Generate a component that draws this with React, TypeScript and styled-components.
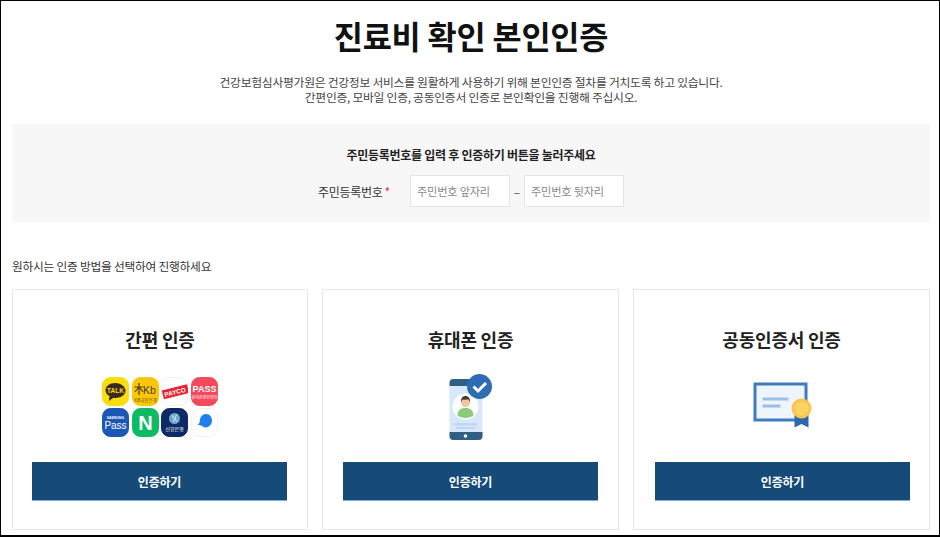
import React from 'react';
import styled, { createGlobalStyle } from 'styled-components';

const GlobalStyle = createGlobalStyle`
  html, body {
    margin: 0;
    padding: 0;
    background: #fff;
    font-family: 'Noto Sans CJK KR', 'Noto Sans', sans-serif;
  }
  * { box-sizing: border-box; }
`;

const Page = styled.div`
  width: 940px;
  height: 537px;
  overflow: hidden;
  border: solid #000;
  border-width: 1px 1px 2px 1px;
  padding: 0 9px 0 11px;
  background: #fff;
`;

const Title = styled.h1`
  margin: 10px 0 0;
  height: 48px;
  line-height: 48px;
  font-size: 31.7px;
  font-weight: 700;
  letter-spacing: -0.2px;
  color: #111;
  text-align: center;
`;

const Intro = styled.p`
  margin: 15px 0 0;
  font-size: 11.8px;
  line-height: 15px;
  letter-spacing: -0.27px;
  color: #444;
  text-align: center;
`;

const Panel = styled.section`
  margin-top: 20px;
  height: 98px;
  padding-top: 21px;
  background: #f7f7f7;
  display: flex;
  flex-direction: column;
  align-items: center;
`;

const PanelHeading = styled.h2`
  margin: 0;
  font-size: 12px;
  line-height: 20px;
  font-weight: 700;
  letter-spacing: -0.27px;
  color: #222;
`;

const FieldRow = styled.div`
  margin-top: 10px;
  display: flex;
  align-items: center;
`;

const FieldLabel = styled.label`
  width: 92px;
  font-size: 12px;
  letter-spacing: -0.3px;
  color: #333;
`;

const Required = styled.span`
  color: #d9304f;
  margin-left: 2px;
`;

const NumberInput = styled.input`
  width: 100px;
  height: 32px;
  padding: 0 6px;
  border: 1px solid #e4e4e4;
  background: #fff;
  font-family: inherit;
  font-size: 11.2px;
  letter-spacing: -0.2px;
  outline: none;
  &::placeholder { color: #8a8a8a; opacity: 1; }
`;

const Dash = styled.span`
  width: 14px;
  text-align: center;
  font-size: 12px;
  color: #555;
`;

const Guide = styled.p`
  margin: 34px 0 0;
  font-size: 11.7px;
  line-height: 20px;
  letter-spacing: -0.22px;
  color: #333;
`;

const CardGrid = styled.div`
  margin-top: 13px;
  display: grid;
  grid-template-columns: 296px 297px 297px;
  column-gap: 14px;
`;

const Card = styled.article`
  height: 241px;
  border: 1px solid #e6e6e6;
  display: flex;
  flex-direction: column;
  align-items: center;
`;

const CardTitle = styled.h3`
  margin: 35px 0 0;
  height: 28px;
  line-height: 28px;
  font-size: 18px;
  font-weight: 700;
  letter-spacing: -0.2px;
  color: #222;
`;

const IconArea = styled.div`
  margin-top: 22px;
  height: 63px;
  display: flex;
  align-items: center;
  justify-content: center;
`;

const Logos = styled.div`
  display: grid;
  grid-template-columns: repeat(4, 27px);
  grid-auto-rows: 29px;
  column-gap: 2.5px;
  row-gap: 2px;
`;

const AuthButton = styled.button<{ $inset: number }>`
  margin: 24px 0 0 ${({ $inset }) => $inset}px;
  align-self: flex-start;
  width: 255px;
  height: 39px;
  border: 0;
  border-bottom: 1px solid #7fb0d0;
  background: #154a79;
  color: #fff;
  font-family: inherit;
  font-size: 12px;
  font-weight: 700;
  letter-spacing: -0.2px;
`;

const LOGO_FONT = "'Liberation Sans', 'Noto Sans CJK KR', sans-serif";

const Tile = ({ fill, children }: { fill: string; children: React.ReactNode }) => (
  <svg width="27" height="29" viewBox="0 0 27 29">
    <rect
      x="0.5"
      y="0.5"
      width="26"
      height="28"
      rx="8"
      fill={fill}
      stroke={fill === '#ffffff' ? '#f1f1f1' : fill}
    />
    {children}
  </svg>
);

const LogoGrid = () => (
  <Logos>
    <Tile fill="#fbdc0c">
      <path d="M13.500 6c-6.200 0-10 3.400-10 7.300 0 2.500 1.600 4.600 4 5.800L6.800 24l4.500-3.300c.7.100 1.500.2 2.200.2 5.800 0 10-3.200 10-7.100S19.300 6 13.500 6z" fill="#3b2a22" />
      <text x="13.500" y="16" textAnchor="middle" fontSize="6.500" fontWeight="700" fill="#fbdc0c" fontFamily={LOGO_FONT}>TALK</text>
    </Tile>
    <Tile fill="#fcc60a">
      <path d="M7 6v12M2.500 10l9 0M3 15l4-5 4 5" stroke="#4c3f22" strokeWidth="1.200" fill="none" />
      <text x="11" y="17" fontSize="10.500" fill="#4c3f22" fontFamily={LOGO_FONT}>Kb</text>
      <text x="13.500" y="25" textAnchor="middle" fontSize="4.500" fill="#6b5a20" fontFamily={LOGO_FONT}>KB국민은행</text>
    </Tile>
    <Tile fill="#ffffff">
      <g transform="rotate(-14 13.500 15)">
        <rect x="1.500" y="10.500" width="26" height="9" fill="#e8222f" />
        <text x="14" y="17.500" textAnchor="middle" fontSize="6.400" fontWeight="700" fill="#fff" fontFamily={LOGO_FONT}>PAYCO</text>
      </g>
    </Tile>
    <Tile fill="#f4495c">
      <text x="13.500" y="15" textAnchor="middle" fontSize="9" fontWeight="700" fill="#fff" fontFamily={LOGO_FONT}>PASS</text>
      <text x="13.500" y="22" textAnchor="middle" fontSize="4" fill="#fff" fontFamily={LOGO_FONT}>휴대폰본인확인</text>
    </Tile>
    <Tile fill="#1b57b5">
      <text x="13.500" y="11" textAnchor="middle" fontSize="3.400" fontWeight="700" fill="#fff" fontFamily={LOGO_FONT}>SAMSUNG</text>
      <text x="13.500" y="20.500" textAnchor="middle" fontSize="10" fill="#fff" fontFamily={LOGO_FONT}>Pass</text>
    </Tile>
    <Tile fill="#0dbb62">
      <text x="13.500" y="22" textAnchor="middle" fontSize="20" fontWeight="700" fill="#fff" fontFamily={LOGO_FONT}>N</text>
    </Tile>
    <Tile fill="#0e2a66">
      <circle cx="13.500" cy="10.500" r="5.500" fill="#6fa7cf" />
      <path d="M11 7.500l5 6M15.500 6.500l-3 7" stroke="#dcecf6" strokeWidth="1" />
      <text x="13.500" y="23" textAnchor="middle" fontSize="5" fill="#fff" fontFamily={LOGO_FONT}>신한은행</text>
    </Tile>
    <Tile fill="#ffffff">
      <path d="M14.500 6c4-.3 6.500 2.700 6.500 6.500 0 4-3 7-6.500 7-2 0-3-1.300-4.500-2-1-.4-2.500-.2-3.500-.7 1.300-.8 2-1.800 2.300-3.600C9 9.300 11 6.300 14.500 6z" fill="#1f7ff0" />
    </Tile>
  </Logos>
);

const PhoneIcon = () => (
  <svg width="60" height="66" viewBox="0 0 60 66">
    <rect x="8.500" y="5" width="33" height="61" rx="4" fill="#d8e8fa" />
    <path d="M8.500 12V9a4 4 0 0 1 4-4h25a4 4 0 0 1 4 4v3z" fill="#2f5f82" />
    <path d="M8.500 58v4a4 4 0 0 0 4 4h25a4 4 0 0 0 4-4v-4z" fill="#2f5f82" />
    <circle cx="24.500" cy="62" r="1.800" fill="#fff" />
    <circle cx="24.500" cy="32.500" r="13" fill="#fff" />
    <path d="M16.500 41.500c0-5 3-7.500 8-7.500s8 2.500 8 7.500c-2 1.500-5 2.500-8 2.500s-6-1-8-2.500z" fill="#8ccb7c" />
    <circle cx="24.500" cy="28.500" r="4.500" fill="#f0c4a4" />
    <path d="M20 28.500c-.5-4 1.500-6.500 4.500-6.500s5 2.500 4.500 6.500c-.5-2-1.500-3-2.500-3.300-1.500.6-4 .6-4.800.3-.8.600-1.400 1.500-1.700 3z" fill="#4b3a32" />
    <rect x="13" y="49" width="23" height="2.500" fill="#bcd6f3" />
    <rect x="15" y="53" width="19" height="2" fill="#bcd6f3" />
    <circle cx="38.500" cy="12.500" r="12.500" fill="#2f6db3" />
    <path d="M32.500 12.500l4.500 4.500 8-8" fill="none" stroke="#fff" strokeWidth="3" />
  </svg>
);

const CertIcon = () => (
  <svg width="60" height="50" viewBox="0 0 60 50">
    <rect x="3" y="2" width="51" height="36" fill="#eef5fc" stroke="#3f7cbd" strokeWidth="3" />
    <rect x="10.500" y="15.500" width="26" height="3" fill="#9cc0e4" />
    <rect x="10.500" y="22.500" width="18" height="3" fill="#9cc0e4" />
    <path d="M42.500 33h14v12.500l-7-3.500-7 3.500z" fill="#2e66ae" />
    <circle cx="49.500" cy="26.500" r="10" fill="#fbc64d" />
    <circle cx="49.500" cy="26.500" r="7" fill="#fdd364" />
  </svg>
);

function App(): JSX.Element {
  return (
    <Page>
      <GlobalStyle />
      <Title>진료비 확인 본인인증</Title>
      <Intro>
        건강보험심사평가원은 건강정보 서비스를 원활하게 사용하기 위해 본인인증 절차를 거치도록 하고 있습니다.
        <br />
        간편인증, 모바일 인증, 공동인증서 인증로 본인확인을 진행해 주십시오.
      </Intro>
      <Panel>
        <PanelHeading>주민등록번호를 입력 후 인증하기 버튼을 눌러주세요</PanelHeading>
        <FieldRow>
          <FieldLabel>
            주민등록번호<Required>*</Required>
          </FieldLabel>
          <NumberInput placeholder="주민번호 앞자리" />
          <Dash>–</Dash>
          <NumberInput placeholder="주민번호 뒷자리" />
        </FieldRow>
      </Panel>
      <Guide>원하시는 인증 방법을 선택하여 진행하세요</Guide>
      <CardGrid>
        <Card>
          <CardTitle>간편 인증</CardTitle>
          <IconArea><LogoGrid /></IconArea>
          <AuthButton $inset={19}>인증하기</AuthButton>
        </Card>
        <Card>
          <CardTitle>휴대폰 인증</CardTitle>
          <IconArea><PhoneIcon /></IconArea>
          <AuthButton $inset={20}>인증하기</AuthButton>
        </Card>
        <Card>
          <CardTitle>공동인증서 인증</CardTitle>
          <IconArea><CertIcon /></IconArea>
          <AuthButton $inset={21}>인증하기</AuthButton>
        </Card>
      </CardGrid>
    </Page>
  );
}

export default App;
